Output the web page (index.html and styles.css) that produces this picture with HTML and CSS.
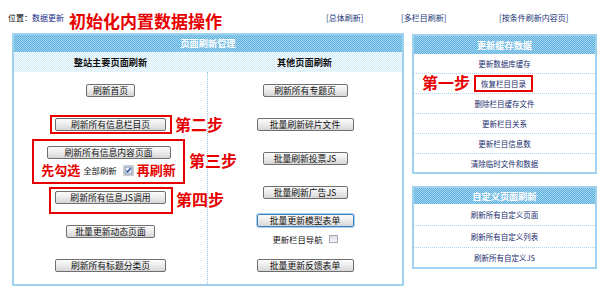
FILE: index.html
```html
<!DOCTYPE html>
<html lang="zh">
<head>
<meta charset="utf-8">
<title>数据更新</title>
<link rel="stylesheet" href="styles.css">
</head>
<body>
<div class="topbar">
  <span class="loc">位置：<a class="nav">数据更新</a></span>
  <span class="title">初始化内置数据操作</span>
  <a class="toplink">[总体刷新]</a>
  <a class="toplink">[多栏目刷新]</a>
  <a class="toplink">[按条件刷新内容页]</a>
</div>
<div class="content">
  <div class="panel main">
    <div class="phead">页面刷新管理</div>
    <div class="subhead">
      <div class="sh">整站主要页面刷新</div>
      <div class="sh">其他页面刷新</div>
    </div>
    <div class="cols">
      <div class="col lcol">
        <button class="btn w49 mt12">刷新首页</button>
        <div class="rbox boxa">
          <button class="btn w111">刷新所有信息栏目页</button>
        </div>
        <div class="rbox boxb">
          <button class="btn w124">刷新所有信息内容页面</button>
          <div class="checkrow">
            <span class="hint">先勾选</span>
            <span class="lbl">全部刷新</span>
            <span class="cbox checked">
              <svg width="11" height="11" viewBox="0 0 11 11"><rect x="0.5" y="0.5" width="10" height="10" fill="#fff" stroke="#9a9a9a" stroke-dasharray="1 1"/><rect x="2" y="2" width="7" height="7" fill="#eef2f6" stroke="#6f86a8" stroke-width="1"/><path d="M3.3 5.4 L4.7 6.9 L7.8 3.2" fill="none" stroke="#2453a6" stroke-width="1.4"/></svg>
            </span>
            <span class="hint">再刷新</span>
          </div>
        </div>
        <div class="rbox boxc">
          <button class="btn w111">刷新所有信息JS调用</button>
        </div>
        <button class="btn w89 mt11">批量更新动态页面</button>
        <button class="btn w111 mt21">刷新所有标题分类页</button>
      </div>
      <div class="col rcol">
        <button class="btn w85 mt12">刷新所有专题页</button>
        <button class="btn w97 mt21">批量刷新碎片文件</button>
        <button class="btn w85 mt21">批量刷新投票JS</button>
        <button class="btn w85 mt21">批量刷新广告JS</button>
        <button class="btn w97 mt15 focus">批量更新模型表单</button>
        <div class="navrow">
          <span class="lbl">更新栏目导航</span>
          <span class="cbox small"></span>
        </div>
        <button class="btn w97 mt13">批量更新反馈表单</button>
      </div>
    </div>
    <span class="step s2">第二步</span>
    <span class="step s3">第三步</span>
    <span class="step s4">第四步</span>
  </div>
  <div class="side">
    <div class="panel p1">
      <div class="phead h18">更新缓存数据</div>
      <div class="row">更新数据库缓存</div>
      <div class="row"><span class="rtag">恢复栏目目录</span></div>
      <div class="row">删除栏目缓存文件</div>
      <div class="row">更新栏目关系</div>
      <div class="row">更新栏目信息数</div>
      <div class="row last">清除临时文件和数据</div>
      <span class="step s1">第一步</span>
    </div>
    <div class="panel p2">
      <div class="phead h16">自定义页面刷新</div>
      <div class="row r22">刷新所有自定义页面</div>
      <div class="row r22">刷新所有自定义列表</div>
      <div class="row r19 last">刷新所有自定义JS</div>
    </div>
  </div>
</div>
</body>
</html>
```

FILE: styles.css
```css
* { box-sizing: border-box; }
html, body { margin: 0; padding: 0; background: #fff; }
body {
  width: 600px;
  height: 293px;
  overflow: hidden;
  font-family: "Noto Sans CJK SC", "Noto Sans", sans-serif;
  color: #000;
}

.topbar {
  display: grid;
  grid-template-columns: 61px 257px 75px 98px auto;
  align-items: start;
  height: 33px;
  padding-left: 8px;
}
.loc, .toplink {
  font-size: 8px;
  line-height: 10px;
  margin-top: 13px;
  white-space: nowrap;
}
.nav { color: #1b2e8a; }
.toplink { color: #213476; }
.title {
  font-size: 17px;
  line-height: 17px;
  margin-top: 12px;
  font-weight: 700;
  color: #e80000;
  white-space: nowrap;
}

.content {
  display: flex;
  align-items: flex-start;
  padding-left: 12px;
}

.panel {
  position: relative;
  border: 2px solid #9fd2ee;
  background: #fff;
}
.phead {
  height: 17px;
  line-height: 17px;
  text-align: center;
  color: #fff;
  font-weight: 700;
  font-size: 9.2px;
  background: repeating-conic-gradient(#5eaedd 0 25%, #a3d6f1 0 50%) 0 0 / 2px 2px;
}
.phead.h18 { height: 18px; line-height: 18px; }
.phead.h16 { height: 16px; line-height: 16px; }

.main { width: 392px; }
.subhead {
  display: flex;
  height: 20px;
  background: repeating-conic-gradient(#d2ebf8 0 25%, #f7fcff 0 50%) 0 0 / 2px 2px;
}
.sh {
  flex: 1;
  text-align: center;
  font-weight: 700;
  font-size: 9.2px;
  line-height: 20px;
  color: #111;
}
.sh:first-child { flex: 0 0 193px; }

.cols { display: flex; }
.col {
  display: flex;
  flex-direction: column;
  align-items: center;
  padding-bottom: 12px;
}
.lcol { flex: 0 0 193px; }
.rcol {
  flex: 1;
  border-left: 1px dotted #8cc6e8;
}

.btn {
  display: block;
  height: 13px;
  padding: 0;
  margin: 0;
  font-family: inherit;
  font-size: 8.8px;
  line-height: 11px;
  color: #111;
  text-align: center;
  white-space: nowrap;
  border: 1px solid #6f6f6f;
  border-radius: 2px;
  background: linear-gradient(#fbfbfb 0%, #ededed 45%, #d6d6d6 100%);
}
.btn.focus {
  border-color: #3f7fbf;
  box-shadow: 0 0 0 1px #a9d0f0;
}
.w49 { width: 49px; }
.w85 { width: 85px; }
.w89 { width: 89px; }
.w97 { width: 97px; }
.w111 { width: 111px; }
.w124 { width: 124px; }
.mt11 { margin-top: 11px; }
.mt12 { margin-top: 12px; }
.mt13 { margin-top: 13px; }
.mt15 { margin-top: 15px; }
.mt21 { margin-top: 21px; }

.rbox {
  border: 2px solid #e60000;
  display: flex;
  flex-direction: column;
  align-items: center;
}
.boxa { width: 122px; height: 19px; margin-top: 18px; justify-content: center; }
.boxb { width: 153px; height: 45px; margin-top: 5px; padding-top: 5px; margin-left: -4px; }
.boxc { width: 124px; height: 27px; margin-top: 3px; padding-top: 2px; }

.checkrow {
  display: flex;
  align-items: center;
  height: 16px;
  margin-top: 3px;
}
.hint {
  font-size: 13px;
  line-height: 16px;
  font-weight: 700;
  color: #e60000;
}
.lbl {
  font-size: 8.4px;
  line-height: 12px;
  color: #111;
  white-space: nowrap;
}
.checkrow .lbl { margin-left: 3px; }
.cbox.checked {
  display: block;
  width: 11px;
  height: 11px;
  margin: 0 3px 0 6px;
}
.cbox.checked svg { display: block; }

.navrow {
  display: flex;
  align-items: center;
  height: 14px;
  margin-top: 5px;
}
.cbox.small {
  display: block;
  width: 9px;
  height: 8px;
  margin-left: 6px;
  border: 1px solid #a8a8b8;
  background: linear-gradient(#dcdce4, #f6f6fa);
}

.step {
  position: absolute;
  font-size: 16px;
  line-height: 16px;
  font-weight: 700;
  color: #e60000;
  white-space: nowrap;
}
.s2 { left: 161px; top: 81px; }
.s3 { left: 175px; top: 117px; }
.s4 { left: 162px; top: 156px; }
.s1 { left: 8px; top: 38px; }

.side {
  margin-left: 8px;
  margin-top: 1px;
  width: 185px;
  display: flex;
  flex-direction: column;
}
.p2 { margin-top: 12px; }
.row {
  height: 20px;
  display: flex;
  align-items: center;
  justify-content: center;
  font-size: 7.5px;
  color: #1a2d6e;
  border-bottom: 1px dotted #a9d5ee;
  white-space: nowrap;
}
.row.last { border-bottom: none; height: 18px; }
.row.r22 { height: 22px; }
.row.r19 { height: 19px; }
.rtag {
  display: block;
  width: 59px;
  height: 17px;
  line-height: 13px;
  text-align: center;
  border: 2px solid #e60000;
  margin-left: -2px;
}
```
